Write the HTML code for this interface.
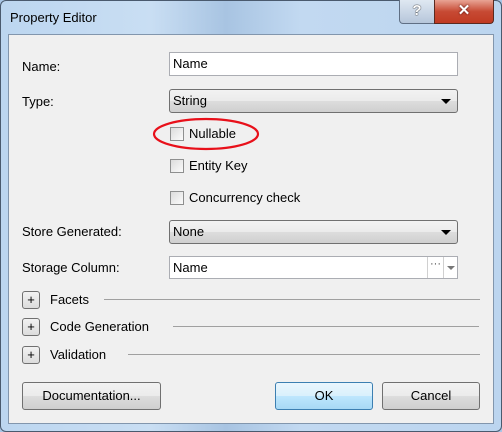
<!DOCTYPE html>
<html><head><style>
*{margin:0;padding:0;box-sizing:border-box}
body{width:502px;height:432px;overflow:hidden;background:#a9c6e6;font-family:"Liberation Sans",sans-serif;font-size:13px;color:#000;position:relative}
.frame{position:absolute;left:0;top:0;width:502px;height:432px;border:1px solid #4a5a6e;border-radius:6px;background:linear-gradient(90deg,#bcd6f0 0%,#c9def3 30%,#a8c4e2 45%,#c2d9f1 60%,#bcd5ef 100%)}
.inner{position:absolute;left:8px;top:34px;width:486px;height:390px;background:#f0f0f0;border:1px solid #8296ad}
.a{position:absolute;white-space:nowrap}
.inp{position:absolute;background:#fff;border:1px solid #abadb3;padding-left:3px;line-height:21px}
.dd{position:absolute;border:1px solid #707070;border-radius:3px;background:linear-gradient(#f2f2f2 0%,#ebebeb 50%,#dddddd 51%,#cfcfcf 100%);padding-left:3px;line-height:22px}
.dd:after{content:"";position:absolute;right:6px;top:9px;border-left:5px solid transparent;border-right:5px solid transparent;border-top:5px solid #000}
.cb{position:absolute;width:14px;height:14px;border:1px solid #8e8f8f;background:linear-gradient(135deg,#dcdcdc,#fbfbfb)}
.pl{position:absolute;width:18px;height:18px;border:1px solid #707070;border-radius:3px;background:linear-gradient(#f2f2f2,#dcdcdc);text-align:center;line-height:15px;font-size:13px}
.ln{position:absolute;height:1px;background:#a0a0a0}
.btn{position:absolute;border:1px solid #707070;border-radius:3px;background:linear-gradient(#f2f2f2 0%,#ebebeb 50%,#dddddd 51%,#cfcfcf 100%);text-align:center;line-height:25px}
</style></head><body>
<div class="frame"></div>
<div class="a" style="left:10px;top:10px;font-size:13px">Property Editor</div>
<div style="position:absolute;left:399px;top:0;width:36px;height:24px;border:1px solid #5f6f84;border-top:none;border-radius:0 0 0 4px;background:linear-gradient(#dfe8f2,#b6c6da);text-align:center;font-size:15px;font-weight:bold;color:#fff;line-height:22px;text-shadow:0 0 1px #222,0 0 1px #222">?</div>
<div style="position:absolute;left:434px;top:0;width:60px;height:24px;border:1px solid #5a2a20;border-top:none;border-radius:0 0 4px 0;background:linear-gradient(#e8a494,#c74a34 50%,#c03a22);text-align:center;font-size:15px;font-weight:bold;color:#fff;line-height:22px;text-shadow:0 0 2px #400">✕</div>
<div class="inner"></div>
<div class="a" style="left:22px;top:59px">Name:</div>
<div class="inp" style="left:169px;top:52px;width:289px;height:24px">Name</div>
<div class="a" style="left:22px;top:94px">Type:</div>
<div class="dd" style="left:169px;top:89px;width:289px;height:24px">String</div>
<div class="cb" style="left:170px;top:127px"></div><div class="a" style="left:189px;top:126px">Nullable</div>
<div class="cb" style="left:170px;top:159px"></div><div class="a" style="left:189px;top:158px">Entity Key</div>
<div class="cb" style="left:170px;top:191px"></div><div class="a" style="left:189px;top:190px">Concurrency check</div>
<svg style="position:absolute;left:0;top:0" width="502" height="432"><ellipse cx="206" cy="134" rx="52" ry="15" fill="none" stroke="#e8101a" stroke-width="2.2"/></svg>
<div class="a" style="left:22px;top:224px">Store Generated:</div>
<div class="dd" style="left:169px;top:220px;width:289px;height:24px">None</div>
<div class="a" style="left:22px;top:260px">Storage Column:</div>
<div class="inp" style="left:169px;top:256px;width:289px;height:23px;line-height:21px">Name</div>
<div style="position:absolute;left:427px;top:257px;width:1px;height:21px;background:#d0d0d0"></div>
<div class="a" style="left:430px;top:258px;font-size:11px;color:#444">···</div>
<div style="position:absolute;left:443px;top:257px;width:1px;height:21px;background:#d0d0d0"></div>
<div style="position:absolute;left:447px;top:266px;border-left:4px solid transparent;border-right:4px solid transparent;border-top:4px solid #777"></div>
<div class="pl" style="left:22px;top:291px">+</div><div class="a" style="left:50px;top:292px">Facets</div><div class="ln" style="left:104px;top:299px;width:376px"></div>
<div class="pl" style="left:22px;top:318px">+</div><div class="a" style="left:50px;top:319px">Code Generation</div><div class="ln" style="left:173px;top:326px;width:306px"></div>
<div class="pl" style="left:22px;top:346px">+</div><div class="a" style="left:50px;top:347px">Validation</div><div class="ln" style="left:128px;top:354px;width:352px"></div>
<div class="btn" style="left:22px;top:382px;width:139px;height:28px">Documentation...</div>
<div class="btn" style="left:275px;top:382px;width:98px;height:28px;border-color:#3c7fb1;background:linear-gradient(#eaf6fd 0%,#d9f0fc 50%,#bee6fd 51%,#a7d9f5 100%)">OK</div>
<div class="btn" style="left:382px;top:382px;width:98px;height:28px">Cancel</div>
</body></html>
